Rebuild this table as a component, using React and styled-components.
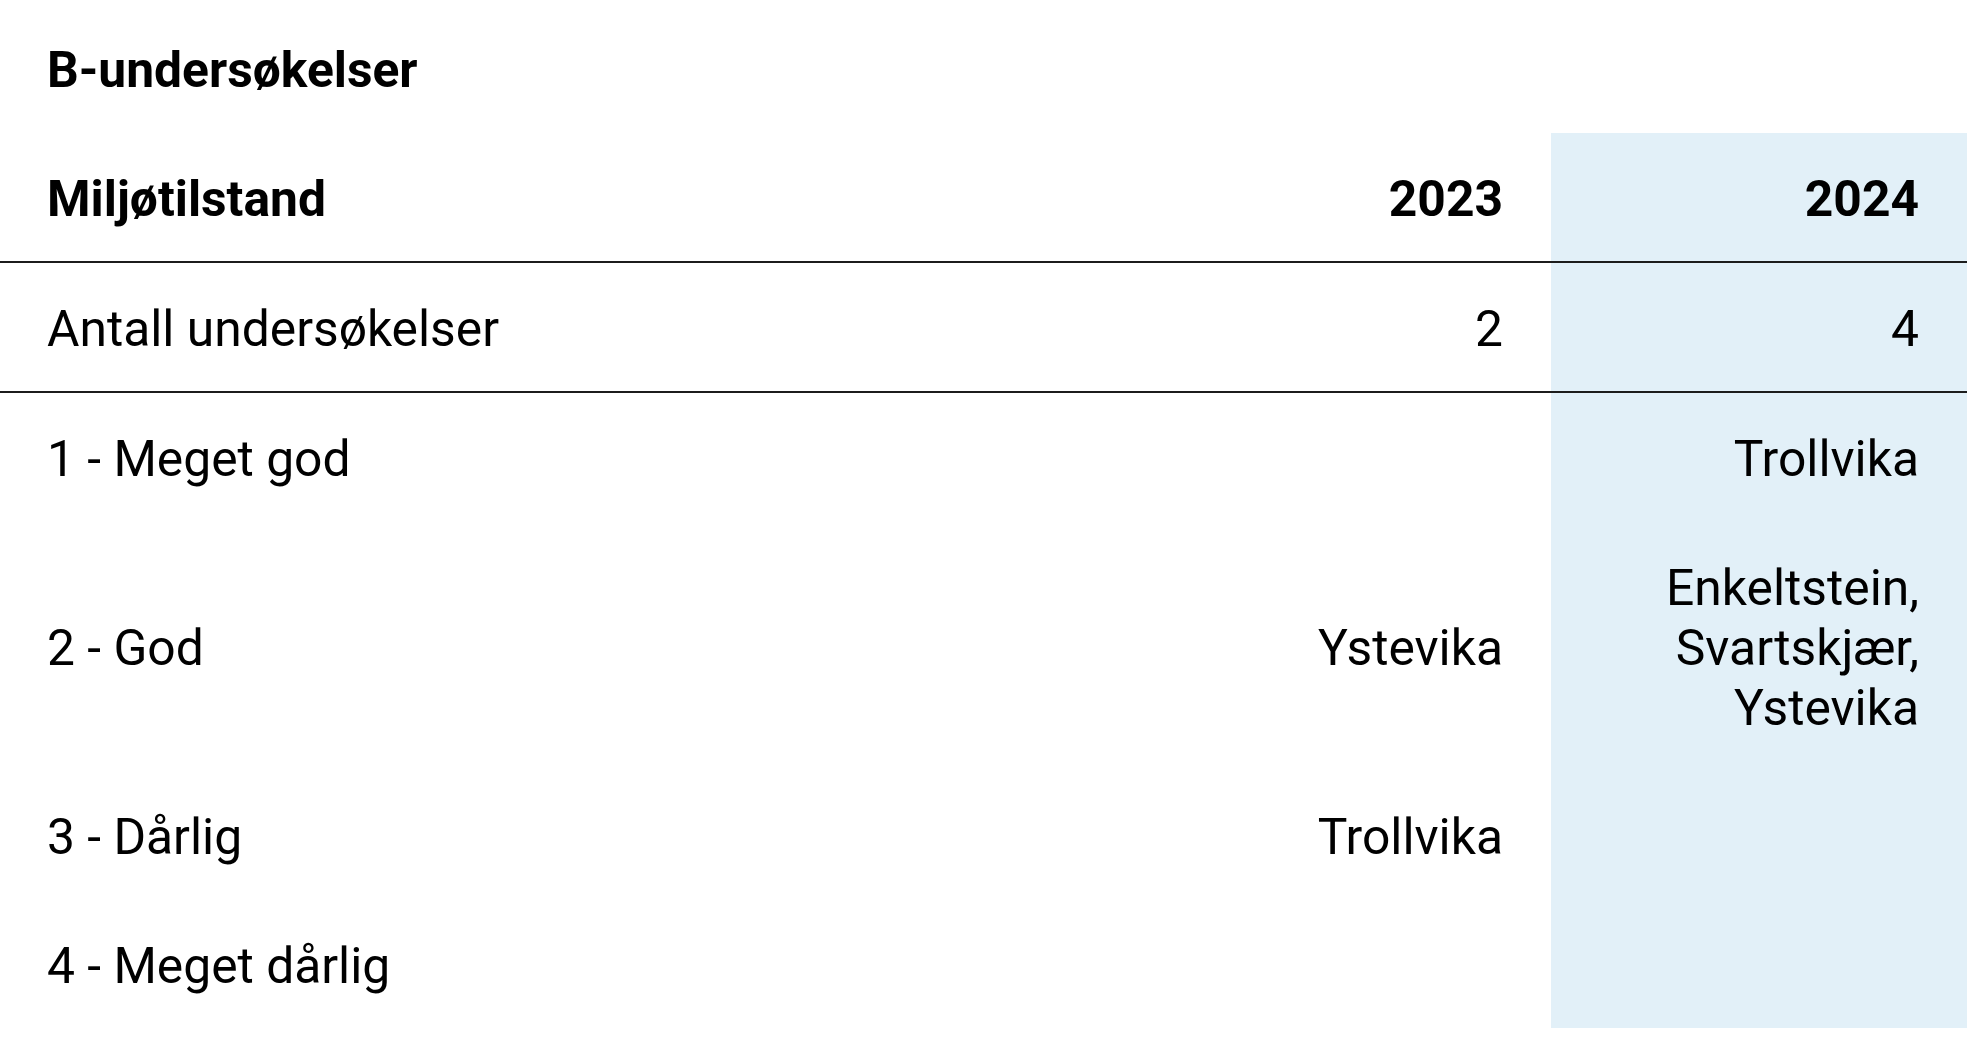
import React from "react";
import styled, { createGlobalStyle } from "styled-components";

const GlobalStyle = createGlobalStyle`
  html, body {
    margin: 0;
    padding: 0;
    background: #ffffff;
  }
  body {
    font-family: Roboto, "Noto Sans", Arial, sans-serif;
    color: #000000;
  }
`;

const Page = styled.div`
  width: 1967px;
`;

const Title = styled.h2`
  margin: 0;
  padding: 40px 47px 33px;
  font-size: 49.75px;
  line-height: 60px;
  font-weight: 700;
`;

const Table = styled.table`
  width: 100%;
  border-collapse: collapse;
  table-layout: fixed;
  font-size: 49.75px;
  line-height: 60px;
`;

const Col = styled.col`
  width: ${(p) => (p.$w ? `${p.$w}px` : "auto")};
`;

const Row = styled.tr`
  border-bottom: 2px solid ${(p) => (p.$ruled ? "#1c1c1c" : "transparent")};
`;

const Cell = styled.td`
  padding: 36px 48px ${(p) => (p.$ruled ? "32px" : "31px")} 47px;
  vertical-align: middle;
  text-align: ${(p) => (p.$align === "right" ? "right" : "left")};
  font-weight: ${(p) => (p.$bold ? 700 : 400)};
  background: ${(p) => (p.$highlight ? "#e2f0f8" : "transparent")};
  white-space: normal;
`;

const rows = [
  { label: "Antall undersøkelser", a: "2", b: "4", ruled: true },
  { label: "1 - Meget god", a: "", b: "Trollvika" },
  { label: "2 - God", a: "Ystevika", b: "Enkeltstein, Svartskjær, Ystevika" },
  { label: "3 - Dårlig", a: "Trollvika", b: "" },
  { label: "4 - Meget dårlig", a: "", b: "" },
];

export default function App() {
  return (
    <Page>
      <GlobalStyle />
      <Title>B-undersøkelser</Title>
      <Table>
        <colgroup>
          <Col />
          <Col $w={416} />
          <Col $w={416} />
        </colgroup>
        <thead>
          <Row $ruled>
            <Cell as="th" $bold $ruled>Miljøtilstand</Cell>
            <Cell as="th" $bold $ruled $align="right">2023</Cell>
            <Cell as="th" $bold $ruled $align="right" $highlight>2024</Cell>
          </Row>
        </thead>
        <tbody>
          {rows.map((r) => (
            <Row key={r.label} $ruled={r.ruled}>
              <Cell $ruled={r.ruled}>{r.label}</Cell>
              <Cell $ruled={r.ruled} $align="right">{r.a}</Cell>
              <Cell $ruled={r.ruled} $align="right" $highlight>{r.b}</Cell>
            </Row>
          ))}
        </tbody>
      </Table>
    </Page>
  );
}
